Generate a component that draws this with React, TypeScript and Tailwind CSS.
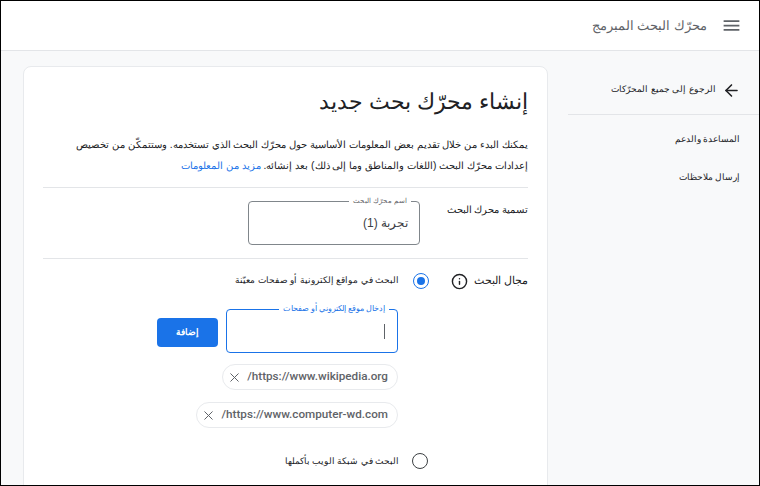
import React from 'react';
import { ArrowLeft, Info, X } from 'lucide-react';

const arabic = { fontFamily: '"Liberation Sans", "Noto Sans", sans-serif' };

function Chip({ url }: { url: string }) {
  return (
    <div className="h-[26px] rounded-full border border-[#e8eaed] flex items-center pr-[9px] pl-[4px] gap-[5px] font-['Roboto'] text-[11.7px] text-[#5f6368] font-medium">
      <span dir="ltr">{url}</span>
      <X className="w-[15px] h-[15px] text-[#5f6368]" strokeWidth={1.6} />
    </div>
  );
}

function Radio({ checked }: { checked?: boolean }) {
  return (
    <div className={`w-4 h-4 rounded-full border-[1.5px] flex items-center justify-center shrink-0 ${checked ? 'border-[#1a73e8]' : 'border-[#3c4043]'}`}>
      {checked && <div className="w-2 h-2 rounded-full bg-[#1a73e8]"></div>}
    </div>
  );
}

export default function App() {
  return (
    <div dir="rtl" style={arabic} className="w-[760px] h-[486px] overflow-hidden border border-black bg-[#f8f9fa] flex flex-col text-[#202124]">
      <header className="h-[50px] shrink-0 bg-white border-b border-[#e3e5e8] flex items-center pr-[17px] gap-[14px]">
        <svg viewBox="0 0 24 24" className="w-[21px] h-[21px] fill-[#5f6368]">
          <path d="M3 18h18v-2H3v2zm0-5h18v-2H3v2zm0-7v2h18V6H3z" />
        </svg>
        <span className="text-[13px] text-[#5f6368]">محرّك البحث المبرمج</span>
      </header>

      <div className="flex flex-1 min-h-0">
        <aside className="w-[191px] ml-[20px] shrink-0 text-[8.6px] text-[#202124]">
          <div className="h-[49px] mt-[15px] border-b border-[#e3e5e8] flex items-center pr-[18px] gap-[6px]">
            <ArrowLeft className="w-[19px] h-[19px] text-[#202124]" strokeWidth={2} />
            <span className="text-[9.3px]">الرجوع إلى جميع المحرّكات</span>
          </div>
          <div className="pr-[19px] pt-[18px] flex flex-col gap-[26px]">
            <span className="h-3">المساعدة والدعم</span>
            <span className="h-3">إرسال ملاحظات</span>
          </div>
        </aside>

        <main className="w-[525px] mt-[15px] h-[500px] bg-white border border-[#e8eaed] rounded-t-lg px-[19px] shrink-0">
          <h1 className="text-[22px] leading-8 mt-[19px] text-[#202124]">إنشاء محرّك بحث جديد</h1>
          <p className="text-[10.3px] leading-[21px] mt-[16px] text-[#202124]">
            يمكنك البدء من خلال تقديم بعض المعلومات الأساسية حول محرّك البحث الذي تستخدمه. وستتمكّن من تخصيص إعدادات محرّك البحث (اللغات والمناطق وما إلى ذلك) بعد إنشائه.{' '}
            <span className="text-[#1a73e8]">مزيد من المعلومات</span>
          </p>

          <div className="mt-[11px] border-t border-[#e3e5e8] pt-[13px] pb-[13px] flex items-start">
            <span className="w-[108px] text-[9.8px] leading-[16px] mt-[1px] text-[#202124]">تسمية محرك البحث</span>
            <div className="relative w-[172px] h-[44px] border border-[#80868b] rounded flex items-center pr-[11px] text-[12px] text-[#3c4043]">
              <span className="absolute -top-[6px] right-[8px] bg-white px-[4px] text-[7.3px] leading-[10px] text-[#5f6368]">اسم محرّك البحث</span>
              <span>تجربة (1)</span>
            </div>
          </div>

          <div className="border-t border-[#e3e5e8] pt-[14px]">
            <div className="flex items-center h-4">
              <span className="text-[10.5px] text-[#202124] w-[60px] whitespace-nowrap">مجال البحث</span>
              <Info className="w-[17px] h-[17px] text-[#202124]" strokeWidth={2} />
              <div className="mr-[22px] flex items-center gap-[14px]">
                <Radio checked />
                <span className="text-[8.8px] text-[#202124]">البحث في مواقع إلكترونية أو صفحات معيّنة</span>
              </div>
            </div>

            <div className="mr-[130px] mt-[20px] flex items-center gap-[8px]">
              <div className="relative w-[172px] h-[44px] border-[1.5px] border-[#1a73e8] rounded flex items-center pr-[12px]">
                <span className="absolute -top-[6px] right-[8px] bg-white px-[4px] text-[7.5px] leading-[10px] text-[#1a73e8]">إدخال موقع إلكتروني أو صفحات</span>
                <div className="w-px h-[15px] bg-[#5f6368]"></div>
              </div>
              <button className="w-[61px] h-[29px] mt-[2px] bg-[#1a73e8] rounded text-white text-[8.5px] font-bold">إضافة</button>
            </div>

            <div className="mr-[130px] mt-[11px] flex flex-col items-start gap-[12px]">
              <Chip url="/https://www.wikipedia.org" />
              <Chip url="/https://www.computer-wd.com" />
            </div>

            <div className="mr-[100px] mt-[25px] flex items-center gap-[13px]">
              <Radio />
              <span className="text-[8.5px] text-[#202124]">البحث في شبكة الويب بأكملها</span>
            </div>
          </div>
        </main>
      </div>
    </div>
  );
}
